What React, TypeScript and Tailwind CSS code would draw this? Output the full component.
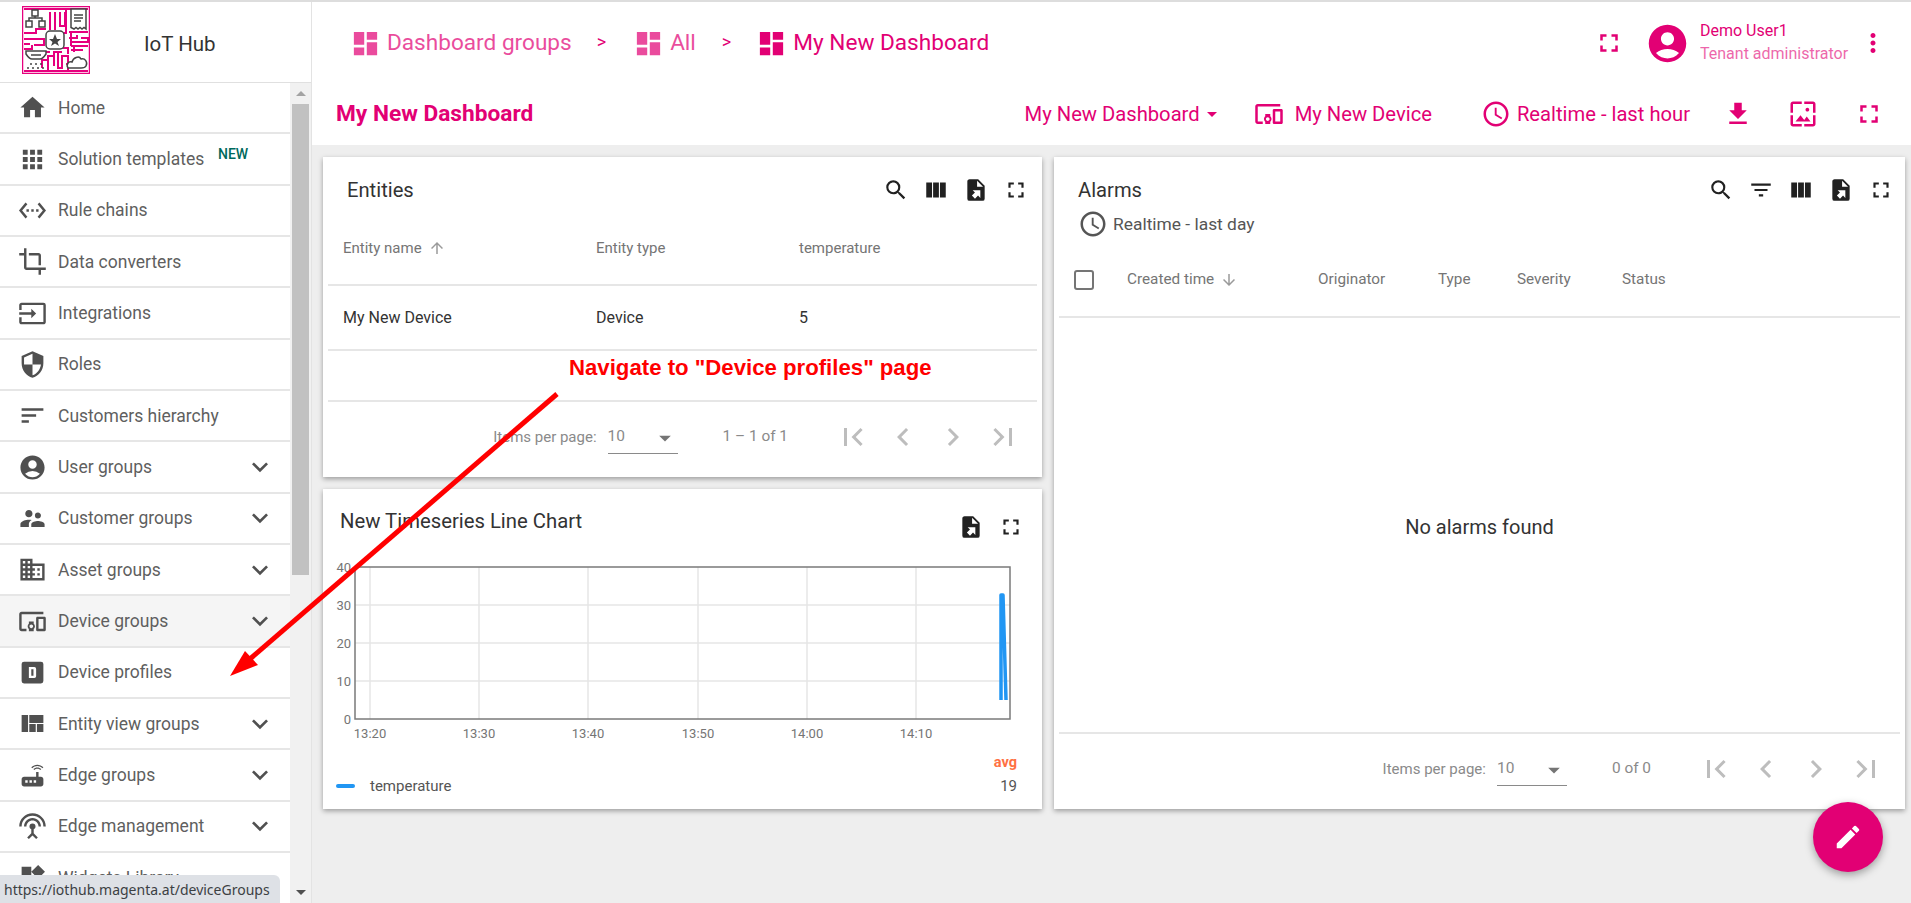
import React from "react";
import {
  MdHome, MdApps, MdSettingsEthernet, MdCrop, MdInput, MdSecurity, MdSort, MdAccountCircle,
  MdSupervisorAccount, MdDomain, MdDevicesOther, MdViewQuilt, MdRouter, MdSettingsInputAntenna,
  MdWidgets, MdExpandMore, MdFullscreen, MdMoreVert, MdDashboard, MdAccessTime, MdFileDownload,
  MdSearch, MdViewColumn, MdFilterList, MdEdit, MdFirstPage, MdChevronLeft, MdChevronRight,
  MdLastPage, MdArrowUpward, MdArrowDownward, MdArrowDropDown, MdWallpaper,
} from "react-icons/md";

const FileExport = ({ size = 26 }: { size?: number }) => (
  <svg width={size} height={size} viewBox="0 0 24 24" fill="#212121">
    <path d="M6,2C4.89,2 4,2.9 4,4V20A2,2 0 0,0 6,22H18A2,2 0 0,0 20,20V8L14,2M13,3.5L18.5,9H13M8.93,12.22H16V19.29L13.88,17.17L11.05,20L8.22,17.17L11.05,14.35" fillRule="evenodd" />
  </svg>
);

const DeviceProfileIcon = ({ size = 29 }: { size?: number }) => (
  <svg width={size} height={size} viewBox="0 0 24 24">
    <rect x="3" y="3" width="18" height="18" rx="2" fill="#505050" />
    <path d="M9 7.500h4.500q1.500 0 1.500 1.500v6q0 1.500-1.500 1.500H9z M11 9.300v5.400h1.800V9.300z" fill="#fff" fillRule="evenodd" />
  </svg>
);

const Logo = () => (
  <svg width="68" height="68" viewBox="0 0 68 68" fill="none">
    <rect x="0.5" y="0.5" width="67" height="67" fill="#fff" stroke="#e6007e" strokeWidth="1.5" />
    <g stroke="#e6007e" strokeWidth="2">
      <path d="M2 3h64M2 65h64M2 27h12v-4h10M2 33h20v6H12M2 43h8v-4M2 38h6M28 6v18M33 6v18M38 6v14h5V6M44 3v24h-8M47 26h19M47 32h8v-3M59 32h7v4H49M49 40h17M49 44h12M49 26v14M40 46h-8v14M36 46v16h4V50h6v10M32 50h-6v14M46 48v-6h-6M20 62v-8h6M44 58h6M52 40v6M24 46h4M28 43v-3M2 65h40M46 65v-4" />
    </g>
    <g stroke="#444" strokeWidth="1.5" fill="#fff">
      <rect x="10" y="4" width="6" height="6" />
      <rect x="4" y="15" width="6" height="6" />
      <rect x="17" y="15" width="6" height="6" />
      <path d="M13 10v2M7 15v-3h13v3" fill="none" />
      <rect x="24" y="25" width="18" height="18" rx="4" />
      <path d="M33 28l2 5h4l-3.500 3 1.500 4-4-2.500-4 2.500 1.500-4-3.500-3h4z" fill="#444" stroke="none" />
      <path d="M49 3h15v20l-2-1.500-2 1.500-2-1.500-2 1.500-2-1.500-2 1.500-3-1.500z" />
      <path d="M52 9h9M52 12h9M52 15h7" fill="none" />
      <path d="M46 62c-2-3 0-7 4-6 1-4 7-7 9-3 4-1 7 3 5 7-1 2-3 2-5 2z" />
      <path d="M4 45h20v3c-2 3-4 5-6 5h-8c-2 0-4-2-6-5z" />
      <path d="M9 49h10" fill="none" />
    </g>
    <g fill="#444">
      <circle cx="9" cy="58" r="1" /><circle cx="14" cy="58" r="1" /><circle cx="19" cy="58" r="1" />
      <circle cx="6" cy="62" r="1" /><circle cx="11" cy="62" r="1" /><circle cx="16" cy="62" r="1" /><circle cx="21" cy="62" r="1" />
    </g>
  </svg>
);

type MenuItem = { label: string; icon: React.ReactNode; chevron?: boolean; badge?: boolean; active?: boolean };

const menu: MenuItem[] = [
  { label: "Home", icon: <MdHome size={29} /> },
  { label: "Solution templates", icon: <MdApps size={29} />, badge: true },
  { label: "Rule chains", icon: <MdSettingsEthernet size={29} /> },
  { label: "Data converters", icon: <MdCrop size={29} /> },
  { label: "Integrations", icon: <MdInput size={29} /> },
  { label: "Roles", icon: <MdSecurity size={29} /> },
  { label: "Customers hierarchy", icon: <MdSort size={29} /> },
  { label: "User groups", icon: <MdAccountCircle size={29} />, chevron: true },
  { label: "Customer groups", icon: <MdSupervisorAccount size={29} />, chevron: true },
  { label: "Asset groups", icon: <MdDomain size={29} />, chevron: true },
  { label: "Device groups", icon: <MdDevicesOther size={29} />, chevron: true, active: true },
  { label: "Device profiles", icon: <DeviceProfileIcon /> },
  { label: "Entity view groups", icon: <MdViewQuilt size={29} />, chevron: true },
  { label: "Edge groups", icon: <MdRouter size={29} />, chevron: true },
  { label: "Edge management", icon: <MdSettingsInputAntenna size={29} />, chevron: true },
  { label: "Widgets Library", icon: <MdWidgets size={29} /> },
];

const Sidebar = () => (
  <aside className="w-[312px] h-full shrink-0 flex flex-col bg-white border-r border-[#e3e3e3]">
    <div className="h-[81px] shrink-0 flex items-center border-b border-[#e0e0e0]">
      <div className="ml-[22px] -mt-[4px]"><Logo /></div>
      <span className="ml-[54px] mt-[4px] text-[20.5px] text-[#333333]">IoT Hub</span>
    </div>
    <div className="flex-1 flex min-h-0">
      <nav className="w-[290px] shrink-0 overflow-hidden">
        {menu.map((m) => (
          <div key={m.label} className={`h-[51.35px] flex items-center border-b-2 border-[#e6e6e6] relative ${m.active ? "bg-[#f5f5f5]" : "bg-white"}`}>
            <span className="ml-[18px] w-[29px] flex justify-center text-[#505050]">{m.icon}</span>
            <span className="ml-[11px] text-[17.5px] text-[#5f5f5f]">{m.label}</span>
            {m.badge && <span className="absolute left-[218px] top-[10px] text-[14px] font-medium text-[#00695c]">NEW</span>}
            {m.chevron && <span className="ml-auto mr-[14px] text-[#505050]"><MdExpandMore size={32} /></span>}
          </div>
        ))}
      </nav>
      <div className="w-[21px] shrink-0 bg-[#f1f1f1] flex flex-col items-center">
        <div className="h-[21px] flex items-center justify-center">
          <div className="w-0 h-0 border-l-[5px] border-r-[5px] border-b-[5px] border-l-transparent border-r-transparent border-b-[#a3a3a3]" />
        </div>
        <div className="w-[17px] h-[471px] bg-[#c1c1c1]" />
        <div className="mt-auto h-[21px] flex items-center justify-center">
          <div className="w-0 h-0 border-l-[5px] border-r-[5px] border-t-[5px] border-l-transparent border-r-transparent border-t-[#505050]" />
        </div>
      </div>
    </div>
  </aside>
);

const Crumb = ({ label, faded, className = "" }: { label: string; faded?: boolean; className?: string }) => (
  <div className={`flex items-center ${faded ? "opacity-70" : ""} ${className}`}>
    <MdDashboard size={31} />
    <span className="ml-[6px] text-[22.6px] leading-none">{label}</span>
  </div>
);

const Sep = ({ className = "" }: { className?: string }) => <span className={`text-[18px] -mt-[4px] ${className}`}>&gt;</span>;

const Header = () => (
  <header className="h-[143px] shrink-0 bg-white text-[#e20074] flex flex-col">
    <div className="h-[82px] flex items-center pl-[38px] pr-[23px]">
      <Crumb label="Dashboard groups" faded />
      <Sep className="ml-[25px]" />
      <Crumb label="All" faded className="ml-[27px]" />
      <Sep className="ml-[26px]" />
      <Crumb label="My New Dashboard" className="ml-[25px]" />
      <div className="ml-auto flex items-center">
        <MdFullscreen size={30} />
        <span className="ml-[21px]"><MdAccountCircle size={45} /></span>
        <div className="ml-[10px] -mt-[3px] flex flex-col text-[16px] leading-[23px] w-[158px]">
          <span>Demo User1</span>
          <span className="opacity-60">Tenant administrator</span>
        </div>
        <MdMoreVert size={30} />
      </div>
    </div>
    <div className="h-[60px] flex items-center pl-[24px] pr-[27px]">
      <span className="text-[22.7px] font-bold leading-none">My New Dashboard</span>
      <div className="ml-auto flex items-center text-[20.2px]">
        <span>My New Dashboard</span>
        <MdArrowDropDown size={24} />
        <span className="ml-[30px]"><MdDevicesOther size={30} /></span>
        <span className="ml-[11px]">My New Device</span>
        <span className="ml-[49px]"><MdAccessTime size={30} /></span>
        <span className="ml-[6px]">Realtime - last hour</span>
        <span className="ml-[33px]"><MdFileDownload size={30} /></span>
        <span className="ml-[35px]"><MdWallpaper size={30} /></span>
        <span className="ml-[36px]"><MdFullscreen size={30} /></span>
      </div>
    </div>
  </header>
);

const IconBtn = ({ children }: { children: React.ReactNode }) => (
  <span className="w-[40px] h-[40px] flex items-center justify-center text-[#212121]">{children}</span>
);

const Pager = ({ range, gap }: { range: string; gap: string }) => (
  <div className={`h-[75px] shrink-0 flex items-center justify-end pb-[5px] pr-[14px] text-[15px] text-[#8a8a8a]`}>
    <span>Items per page:</span>
    <div className="ml-[11px] w-[70px] h-[32px] flex items-center justify-between border-b border-[#8a8a8a] text-[15.5px] mt-[2px]">
      <span className="-mt-[2px]">10</span>
      <span className="text-[#757575] mr-[-1px]"><MdArrowDropDown size={28} /></span>
    </div>
    <span className={`ml-[45px] text-[15.4px] ${gap}`}>{range}</span>
    <div className="flex text-[#bdbdbd]">
      {[MdFirstPage, MdChevronLeft, MdChevronRight, MdLastPage].map((I, i) => (
        <span key={i} className="w-[50px] flex justify-center"><I size={36} /></span>
      ))}
    </div>
  </div>
);

const EntitiesCard = () => (
  <section className="h-[320px] shrink-0 bg-white shadow-[0_2px_5px_rgba(0,0,0,0.35)] flex flex-col">
    <div className="h-[66px] shrink-0 flex items-center pl-[24px] pr-[6px]">
      <span className="text-[20.2px] text-[#333333]">Entities</span>
      <div className="ml-auto flex">
        <IconBtn><MdSearch size={26} /></IconBtn>
        <IconBtn><MdViewColumn size={26} /></IconBtn>
        <IconBtn><FileExport /></IconBtn>
        <IconBtn><MdFullscreen size={26} /></IconBtn>
      </div>
    </div>
    <div className="mx-[5px] flex flex-col">
      <div className="h-[63px] grid grid-cols-[253px_203px_1fr] pb-[11px] items-center border-b-2 border-[#e6e6e6] pl-[15px] text-[15px] text-[#757575]">
        <span className="flex items-center">Entity name<MdArrowUpward size={18} className="ml-[6px] text-[#9a9a9a]" /></span>
        <span>Entity type</span>
        <span>temperature</span>
      </div>
      <div className="h-[65px] grid grid-cols-[253px_203px_1fr] items-center border-b-2 border-[#e6e6e6] pl-[15px] text-[16px] text-[#333333]">
        <span>My New Device</span>
        <span>Device</span>
        <span>5</span>
      </div>
      <div className="h-[51px] border-b-2 border-[#e6e6e6]" />
    </div>
    <Pager range="1 – 1 of 1" gap="mr-[40px]" />
  </section>
);

const ChartCard = () => {
  const ys = [{ v: "40", y: 12 }, { v: "30", y: 50 }, { v: "20", y: 88 }, { v: "10", y: 126 }, { v: "0", y: 164 }];
  const xs = [
    { v: "13:20", x: 47 }, { v: "13:30", x: 156 }, { v: "13:40", x: 265 },
    { v: "13:50", x: 375 }, { v: "14:00", x: 484 }, { v: "14:10", x: 593 },
  ];
  return (
    <section className="flex-1 bg-white shadow-[0_2px_5px_rgba(0,0,0,0.35)] flex flex-col">
      <div className="h-[66px] shrink-0 flex items-start pl-[17px] pr-[11px]">
        <span className="mt-[20px] text-[20.3px] leading-[24px] text-[#333333]">New Timeseries Line Chart</span>
        <div className="ml-auto flex mt-[18px]">
          <IconBtn><FileExport /></IconBtn>
          <IconBtn><MdFullscreen size={26} /></IconBtn>
        </div>
      </div>
      <svg width="719" height="190" viewBox="0 0 719 190" className="shrink-0" style={{ fontFamily: "Roboto, sans-serif" }}>
        {ys.slice(1, 4).map((t) => <line key={t.v} x1="32" x2="687" y1={t.y} y2={t.y} stroke="#e6e6e6" strokeWidth="1.5" />)}
        {xs.map((t) => <line key={t.v} x1={t.x} x2={t.x} y1="12" y2="164" stroke="#e6e6e6" strokeWidth="1.5" />)}
        <rect x="32" y="12" width="655" height="152" fill="none" stroke="#7a7a7a" strokeWidth="1.5" />
        {ys.map((t) => <text key={t.v} x="28" y={t.y + 5} fontSize="13" textAnchor="end" fill="#757575">{t.v}</text>)}
        {xs.map((t) => <text key={t.v} x={t.x} y="183" fontSize="13" textAnchor="middle" fill="#757575">{t.v}</text>)}
        <polyline points="678,145 678,40 680,40 683,145" fill="none" stroke="#2196f3" strokeWidth="3.5" strokeLinejoin="round" />
      </svg>
      <div className="mt-[10px] h-[16px] pr-[25px] text-right text-[14.5px] leading-[16px] font-bold text-[#ff7043]">avg</div>
      <div className="mt-[7px] h-[16px] flex items-center pl-[13px] pr-[25px] text-[15px] text-[#555555]">
        <span className="w-[19px] h-[4px] bg-[#2196f3] rounded-sm" />
        <span className="ml-[15px]">temperature</span>
        <span className="ml-auto">19</span>
      </div>
    </section>
  );
};

const AlarmsCard = () => (
  <section className="h-[652px] flex-1 bg-white shadow-[0_2px_5px_rgba(0,0,0,0.35)] flex flex-col relative">
    <div className="pl-[24px] pt-[20px] shrink-0">
      <div className="h-[26px] flex items-center text-[20.2px] text-[#333333]">Alarms</div>
      <div className="mt-[8px] h-[26px] flex items-center text-[17.4px] text-[#555555]">
        <MdAccessTime size={30} />
        <span className="ml-[5px]">Realtime - last day</span>
      </div>
    </div>
    <div className="absolute right-[4px] top-[13px] flex">
      <IconBtn><MdSearch size={26} /></IconBtn>
      <IconBtn><MdFilterList size={26} /></IconBtn>
      <IconBtn><MdViewColumn size={26} /></IconBtn>
      <IconBtn><FileExport /></IconBtn>
      <IconBtn><MdFullscreen size={26} /></IconBtn>
    </div>
    <div className="mx-[5px] mt-[23px] h-[58px] pb-[17px] shrink-0 grid grid-cols-[68px_191px_120px_79px_105px_1fr] items-center border-b-2 border-[#e6e6e6] text-[15.3px] text-[#757575]">
      <span className="ml-[15px] w-[20px] h-[20px] border-2 border-[#757575] rounded-[3px]" />
      <span className="flex items-center">Created time<MdArrowDownward size={18} className="ml-[6px] text-[#9a9a9a]" /></span>
      <span>Originator</span>
      <span>Type</span>
      <span>Severity</span>
      <span>Status</span>
    </div>
    <div className="flex-1 flex items-center justify-center pt-[3px] text-[20px] text-[#333333]">No alarms found</div>
    <div className="mx-[5px] border-b-2 border-[#e6e6e6]" />
    <Pager range="0 of 0" gap="mr-[40px]" />
  </section>
);

export default function App() {
  return (
    <div className="relative w-[1911px] h-[903px] overflow-hidden bg-[#eeeeee]" style={{ fontFamily: "Roboto, sans-serif" }}>
      <div className="h-[2px] bg-[#dddddd]" />
      <div className="flex h-[901px]">
        <Sidebar />
        <main className="flex-1 flex flex-col min-w-0">
          <Header />
          <div className="flex-1 flex items-start gap-[12px] pl-[11px] pr-[6px] pt-[12px]">
            <div className="w-[719px] h-[652px] shrink-0 flex flex-col gap-[12px]">
              <EntitiesCard />
              <ChartCard />
            </div>
            <AlarmsCard />
          </div>
        </main>
      </div>

      <button className="absolute left-[1813px] top-[802px] w-[70px] h-[70px] rounded-full bg-[#e20074] flex items-center justify-center text-white shadow-[0_3px_8px_rgba(0,0,0,0.35)]">
        <MdEdit size={30} />
      </button>

      <svg className="absolute left-0 top-0 pointer-events-none" width="1911" height="903">
        <line x1="557" y1="394" x2="250" y2="659" stroke="#ff0000" strokeWidth="5" />
        <polygon points="230,676 245,651 258,665" fill="#ff0000" />
      </svg>
      <span className="absolute left-[569px] top-[355px] text-[22.2px] leading-[26px] font-bold text-[#ff0000] whitespace-nowrap" style={{ fontFamily: '"Liberation Sans", sans-serif' }}>
        Navigate to "Device profiles" page
      </span>

      <div className="absolute left-0 bottom-0 w-[280px] h-[28px] bg-[#dee1e6] rounded-tr-md flex items-center pl-[4px] pt-[1px] text-[14px] text-[#3c4043] whitespace-nowrap" style={{ fontFamily: '"Noto Sans", sans-serif' }}>
        https://iothub.magenta.at/deviceGroups
      </div>
    </div>
  );
}
